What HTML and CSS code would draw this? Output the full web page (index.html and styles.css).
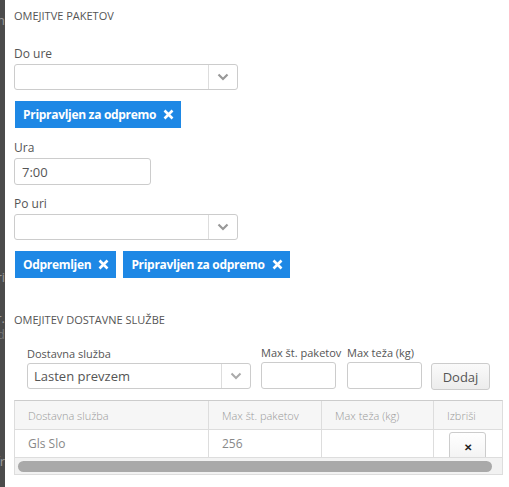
FILE: index.html
```html
<!DOCTYPE html>
<html lang="sl">
<head>
  <meta charset="UTF-8" />
  <meta name="viewport" content="width=device-width, initial-scale=1.0"/>
  <title>Omejitve</title>
  <link rel="stylesheet" href="styles.css">
</head>
<body>

<div class="backdrop">
  <span class="bd-1">n</span>
  <span class="bd-2">ri</span>
  <span class="bd-3">r.</span>
  <span class="bd-4">d</span>
  <span class="bd-5">fr</span>
</div>

<div class="panel">
  <h4>Omejitve paketov</h4>

  <label>Do ure</label>
  <div class="select">
    <span class="select-value"></span>
    <span class="select-arrow">
      <svg width="12" height="8" viewBox="0 0 12 8"><path d="M1.5 1.5 6 6l4.5-4.5" fill="none" stroke="#999" stroke-width="2.2"/></svg>
    </span>
  </div>
  <div class="tags">
    <span class="tag">Pripravljen za odpremo <svg class="tag-x" width="11" height="11" viewBox="0 0 11 11"><path d="M1.5 1.5l8 8M9.5 1.5l-8 8" stroke="#fff" stroke-width="2.6"/></svg></span>
  </div>

  <label>Ura</label>
  <input class="time" type="text" value="7:00">

  <label>Po uri</label>
  <div class="select">
    <span class="select-value"></span>
    <span class="select-arrow">
      <svg width="12" height="8" viewBox="0 0 12 8"><path d="M1.5 1.5 6 6l4.5-4.5" fill="none" stroke="#999" stroke-width="2.2"/></svg>
    </span>
  </div>
  <div class="tags">
    <span class="tag">Odpremljen <svg class="tag-x" width="11" height="11" viewBox="0 0 11 11"><path d="M1.5 1.5l8 8M9.5 1.5l-8 8" stroke="#fff" stroke-width="2.6"/></svg></span>
    <span class="tag">Pripravljen za odpremo <svg class="tag-x" width="11" height="11" viewBox="0 0 11 11"><path d="M1.5 1.5l8 8M9.5 1.5l-8 8" stroke="#fff" stroke-width="2.6"/></svg></span>
  </div>

  <h4 class="second">Omejitev dostavne službe</h4>

  <div class="addrow">
    <div class="field f-service">
      <label>Dostavna služba</label>
      <div class="select">
        <span class="select-value">Lasten prevzem</span>
        <span class="select-arrow">
          <svg width="12" height="8" viewBox="0 0 12 8"><path d="M1.5 1.5 6 6l4.5-4.5" fill="none" stroke="#aaa" stroke-width="2"/></svg>
        </span>
      </div>
    </div>
    <div class="field f-num f-count">
      <label>Max št. paketov</label>
      <input type="text">
    </div>
    <div class="field f-num f-weight">
      <label>Max teža (kg)</label>
      <input type="text">
    </div>
    <button class="btn">Dodaj</button>
  </div>

  <div class="tablewrap">
    <table>
      <thead>
        <tr>
          <th class="c1">Dostavna služba</th>
          <th class="c2">Max št. paketov</th>
          <th class="c3">Max teža (kg)</th>
          <th class="c4">Izbriši</th>
        </tr>
      </thead>
      <tbody>
        <tr>
          <td>Gls Slo</td>
          <td>256</td>
          <td></td>
          <td class="del"><div class="del-clip"><button class="btn-del">&#x2715;</button></div></td>
        </tr>
      </tbody>
    </table>
    <div class="scrollbar"><div class="thumb"></div></div>
  </div>
</div>

</body>
</html>
```

FILE: styles.css
```css
html, body {
  margin: 0;
  height: 100%;
}

body {
  font-family: "Open Sans", "Liberation Sans", sans-serif;
  font-size: 12px;
  color: #555;
  background: #fff;
  display: flex;
}

/* dimmed page behind the panel */
.backdrop {
  width: 5px;
  flex: none;
  background: #4b4b4b;
  position: relative;
  overflow: hidden;
  color: #9a9a9a;
  font-size: 13px;
  line-height: 13px;
}

.backdrop span {
  position: absolute;
  right: 0;
}
.bd-1 { top: 14px; }
.bd-2 { top: 271px; }
.bd-3 { top: 312px; }
.bd-4 { top: 328px; color: #777; }
.bd-5 { top: 455px; }

.panel {
  flex: 1;
  padding: 8px 6px 0 9px;
}

h4 {
  margin: 0 0 22px;
  font-size: 11px;
  font-weight: 400;
  text-transform: uppercase;
  color: #555;
  line-height: 16px;
}

h4.second {
  margin-top: 34px;
  margin-bottom: 17px;
}

label {
  display: block;
  line-height: 16px;
  margin-bottom: 2px;
  white-space: nowrap;
}

.select {
  width: 224px;
  height: 26px;
  box-sizing: border-box;
  border: 1px solid #ccc;
  border-radius: 3px;
  display: flex;
  background: #fff;
}

.select-value {
  flex: 1;
  padding: 0 6px;
  line-height: 24px;
  font-size: 13px;
  color: #555;
}

.select-arrow {
  width: 28px;
  border-left: 1px solid #ddd;
  display: flex;
  align-items: center;
  justify-content: center;
}

.tags {
  display: flex;
  gap: 7px;
  margin: 11px 0 12px 1px;
}

.tag {
  background: #1e88e5;
  color: #fff;
  font-weight: 700;
  font-size: 12px;
  letter-spacing: -0.3px;
  height: 27px;
  padding: 0 7px 0 8px;
  display: flex;
  align-items: center;
  gap: 7px;
}

input {
  font-family: inherit;
  box-sizing: border-box;
  border: 1px solid #ccc;
  border-radius: 3px;
  height: 27px;
  padding: 0 7px;
  font-size: 13px;
  color: #555;
  outline: none;
  display: block;
}

.time {
  width: 137px;
  margin-bottom: 11px;
}

.addrow {
  display: flex;
  align-items: flex-end;
  padding-left: 13px;
}

.addrow label {
  font-size: 11px;
  margin-bottom: 1px;
}

.f-service {
  margin-right: 10px;
}

.f-count { width: 86px; }
.f-weight { width: 84px; }

.f-num input {
  width: 75px;
}

.btn {
  font-family: inherit;
  font-size: 13px;
  color: #555;
  background: linear-gradient(#fafafa, #ececec);
  border: 1px solid #ccc;
  border-radius: 3px;
  height: 27px;
  width: 59px;
  margin-bottom: -1px;
}

.tablewrap {
  margin-top: 11px;
  width: 489px;
  border: 1px solid #ddd;
  border-top-color: #ccc;
  box-sizing: border-box;
  overflow: hidden;
}

table {
  border-collapse: collapse;
  width: 100%;
  table-layout: fixed;
}

th, td {
  text-align: left;
  border-right: 1px solid #ddd;
  padding: 0 13px;
  white-space: nowrap;
}

th:last-child, td:last-child {
  border-right: none;
}

th {
  font-size: 11px;
  font-weight: 300;
  color: #999;
  background: #f6f6f6;
  height: 28px;
  border-bottom: 1px solid #ddd;
}

td {
  color: #888;
  height: 27px;
  font-size: 12px;
}

.c1 { width: 167px; }
.c2 { width: 86px; }
.c3 { width: 85px; }

td.del {
  padding: 0;
  vertical-align: top;
}

.del-clip {
  height: 27px;
  overflow: hidden;
  padding-left: 15px;
}

.btn-del {
  margin-top: 2px;
  width: 37px;
  height: 30px;
  border: 1px solid #ccc;
  border-radius: 3px;
  background: linear-gradient(#fff, #f2f2f2);
  font-size: 10px;
  font-weight: 700;
  color: #222;
}

.scrollbar {
  background: #f2f2f2;
  border-top: 1px solid #ddd;
  height: 16px;
  display: flex;
  align-items: center;
  padding: 0 10px 0 3px;
}

.thumb {
  flex: 1;
  height: 11px;
  border-radius: 6px;
  background: #a9a9a9;
}
```
